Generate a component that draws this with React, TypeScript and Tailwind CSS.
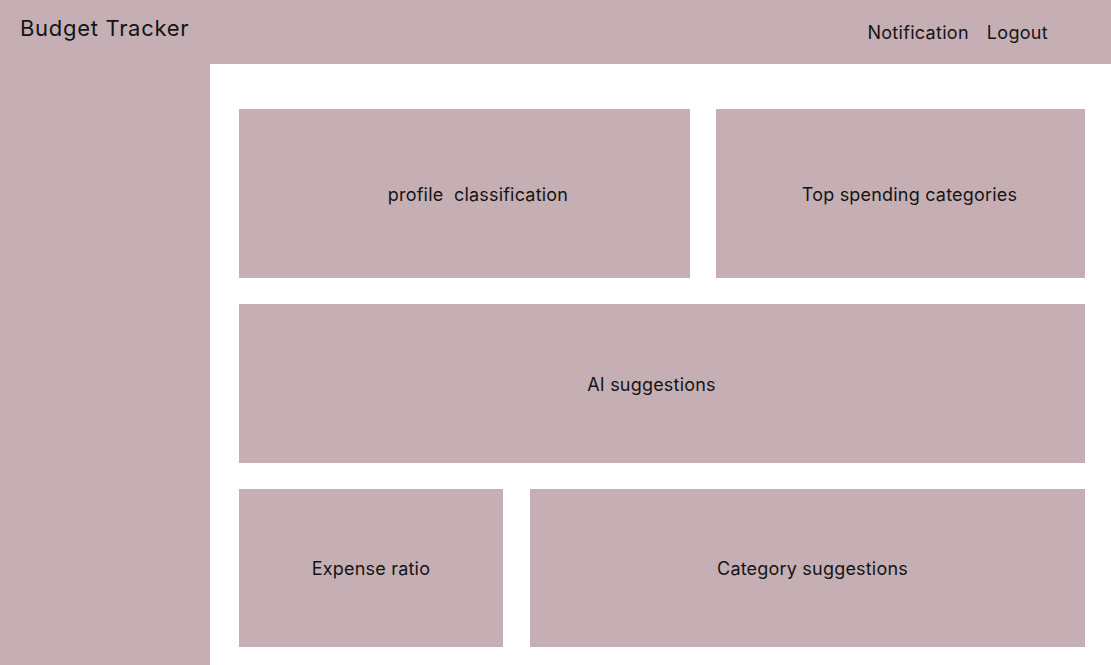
export default function App() {
  return (
    <div className="h-screen w-full flex flex-col bg-[#c5afb5] text-[#141414]" style={{ fontFamily: "Inter, 'Noto Sans', sans-serif" }}>
      <header className="h-[64px] shrink-0 flex items-start justify-between">
        <h1 className="pl-[20px] pt-[14px] text-[22px] leading-[28px] font-normal tracking-[0.7px]">Budget Tracker</h1>
        <nav className="flex gap-[18px] pr-[63px] pt-[21px] text-[18px] leading-[24px] tracking-[0.3px]">
          <span>Notification</span>
          <span>Logout</span>
        </nav>
      </header>
      <div className="flex flex-1 min-h-0">
        <aside className="w-[210px] shrink-0" />
        <main className="flex-1 bg-white pl-[29px] pr-[26px] pt-[45px] pb-[18px] flex flex-col gap-[26px] text-[18px] tracking-[0.2px]">
          <div className="flex gap-[26px] h-[169px]">
            <div className="w-[451px] bg-[#c5afb5] flex items-center justify-center pl-[27px] pt-[2px]">profile&nbsp; classification</div>
            <div className="flex-1 bg-[#c5afb5] flex items-center justify-center pl-[18px] pt-[2px]">Top spending categories</div>
          </div>
          <div className="h-[159px] bg-[#c5afb5] flex items-center justify-center pr-[21px] pt-[2px]">AI suggestions</div>
          <div className="flex gap-[27px] h-[158px]">
            <div className="w-[264px] bg-[#c5afb5] flex items-center justify-center">Expense ratio</div>
            <div className="flex-1 bg-[#c5afb5] flex items-center justify-center pl-[10px]">Category suggestions</div>
          </div>
        </main>
      </div>
    </div>
  );
}
